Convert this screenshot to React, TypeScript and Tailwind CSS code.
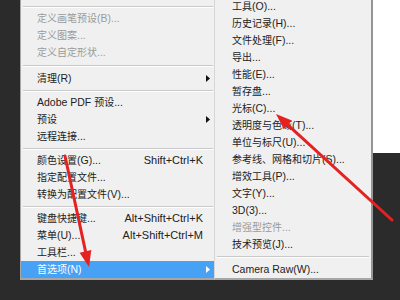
import React from 'react'

const cjk = /([\u3000-\u303f\u4e00-\u9fff\uff00-\uffef]+)/

// CJK glyphs in the screenshot are a little narrower than the latin text
const Label = ({ text }: { text: string }) => (
  <>
    {text.split(cjk).map((part, i) =>
      i % 2 === 1 ? (
        <span key={i} className="text-[10px]">
          {part}
        </span>
      ) : (
        <span key={i}>{part}</span>
      )
    )}
  </>
)

type Item =
  | { sep: true; h?: string }
  | { label: string; shortcut?: string; sub?: boolean; disabled?: boolean; active?: boolean }

const mainItems: Item[] = [
  { sep: true },
  { label: '定义画笔预设(B)...', disabled: true },
  { label: '定义图案...', disabled: true },
  { label: '定义自定形状...', disabled: true },
  { sep: true, h: 'h-[9px]' },
  { label: '清理(R)', sub: true },
  { sep: true },
  { label: 'Adobe PDF 预设...' },
  { label: '预设', sub: true },
  { label: '远程连接...' },
  { sep: true },
  { label: '颜色设置(G)...', shortcut: 'Shift+Ctrl+K' },
  { label: '指定配置文件...' },
  { label: '转换为配置文件(V)...' },
  { sep: true },
  { label: '键盘快捷键...', shortcut: 'Alt+Shift+Ctrl+K' },
  { label: '菜单(U)...', shortcut: 'Alt+Shift+Ctrl+M' },
  { label: '工具栏...' },
  { label: '首选项(N)', sub: true, active: true },
]

const subItems: Item[] = [
  { label: '工具(O)...' },
  { label: '历史记录(H)...' },
  { label: '文件处理(F)...' },
  { label: '导出...' },
  { label: '性能(E)...' },
  { label: '暂存盘...' },
  { label: '光标(C)...' },
  { label: '透明度与色域(T)...' },
  { label: '单位与标尺(U)...' },
  { label: '参考线、网格和切片(S)...' },
  { label: '增效工具(P)...' },
  { label: '文字(Y)...' },
  { label: '3D(3)...' },
  { label: '增强型控件...', disabled: true },
  { label: '技术预览(J)...' },
  { sep: true, h: 'h-[8px]' },
  { label: 'Camera Raw(W)...' },
]

const Caret = ({ white }: { white?: boolean }) => (
  <svg width="4" height="7" viewBox="0 0 4 7">
    <path d="M0 0 L4 3.5 L0 7 Z" fill={white ? '#ffffff' : '#111111'} />
  </svg>
)

const MenuList = ({ items, indent, sepClass }: { items: Item[]; indent: string; sepClass: string }) => (
  <>
    {items.map((item, i) => {
      if ('sep' in item) {
        return (
          <div key={i} className={`${item.h ?? 'h-[7px]'} flex flex-col justify-center ${sepClass}`}>
            <div className="h-px bg-[#c9c9c9]" />
            <div className="h-px bg-white" />
          </div>
        )
      }
      return (
        <div
          key={i}
          className={`h-[17px] flex items-center justify-between ${indent} ${
            item.sub ? 'pr-[4px]' : 'pr-[11px]'
          } ${item.active ? 'bg-[#47a1f4] text-white' : item.disabled ? 'text-[#9a9a9a]' : 'text-[#222222]'}`}
        >
          <span className="whitespace-nowrap text-[10.5px]">
            <Label text={item.label} />
          </span>
          {item.shortcut && <span className="whitespace-nowrap">{item.shortcut}</span>}
          {item.sub && <Caret white={item.active} />}
        </div>
      )
    })}
  </>
)

const App = () => {
  return (
    <div className="relative w-[400px] h-[300px] overflow-hidden bg-[#2b2b2b] flex items-start font-['Liberation_Sans','Noto_Sans_CJK_SC',sans-serif] text-[11px] leading-none">
      <div className="w-5 shrink-0" />

      {/* main edit menu */}
      <div className="w-[194px] h-[280px] shrink-0 bg-[#f0f0f0] border-l border-b-2 border-[#a6a6a6] pt-[3px] flex flex-col">
        <MenuList items={mainItems} indent="pl-4" sepClass="ml-[2px] mr-px" />
      </div>

      {/* preferences submenu */}
      <div className="w-[159px] h-[282px] shrink-0 -mt-[2px] bg-[#f0f0f0] border-l border-[#d6d6d6] border-r-2 border-r-[#959595] border-b-2 border-b-[#a6a6a6] flex flex-col">
        <MenuList items={subItems} indent="pl-[17px]" sepClass="mx-[2px]" />
      </div>

      <div className="flex-1 flex flex-col">
        <div className="h-[153px] bg-white" />
      </div>

      {/* red annotation arrows */}
      <svg className="absolute inset-0 pointer-events-none" width="400" height="300" viewBox="0 0 400 300">
        <line x1="65" y1="156" x2="85.5" y2="251.4" stroke="#e52222" strokeWidth="3" strokeLinecap="round" />
        <polygon points="89,267 91.3,250.1 79.6,252.7" fill="#e52222" />
        <line x1="392" y1="220" x2="287.8" y2="124.8" stroke="#e52222" strokeWidth="3" strokeLinecap="round" />
        <polygon points="276,114 291.9,120.4 283.8,129.2" fill="#e52222" />
      </svg>
    </div>
  )
}

export default App
